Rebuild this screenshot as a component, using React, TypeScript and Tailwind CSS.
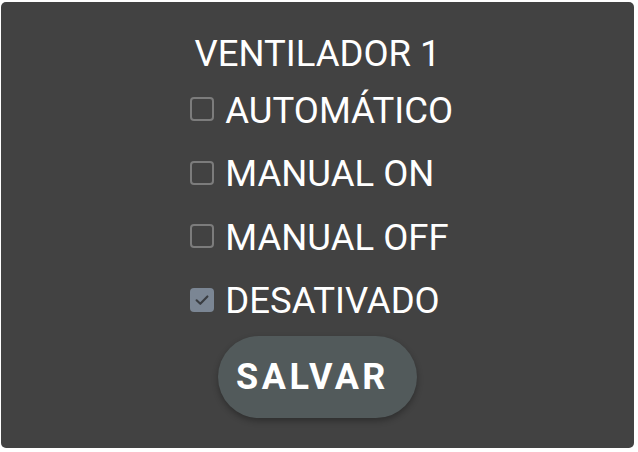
import React from "react";

const options = [
  { label: "AUTOMÁTICO", checked: false },
  { label: "MANUAL ON", checked: false },
  { label: "MANUAL OFF", checked: false },
  { label: "DESATIVADO", checked: true },
];

function Box({ checked }: { checked: boolean }) {
  if (checked) {
    return (
      <span className="mt-[6.5px] flex h-[24px] w-[24px] shrink-0 items-center justify-center rounded-[4px] bg-[#7b8694]">
        <svg width="18" height="18" viewBox="0 0 16 16" fill="none">
          <path d="M3.2 8.3 L6.5 11.4 L12.8 4.8" stroke="#3a3d42" strokeWidth="1.9" strokeLinecap="round" strokeLinejoin="round" />
        </svg>
      </span>
    );
  }
  return <span className="mt-[6.5px] block h-[24px] w-[24px] shrink-0 rounded-[4px] border-2 border-[#7c7c7c] bg-[#424242]" />;
}

export default function App() {
  return (
    <div className="h-[452px] w-[638px] bg-white pl-[1px] pt-[2px]" style={{ fontFamily: "Roboto, 'Liberation Sans', sans-serif" }}>
      <div className="flex h-[446px] w-[633px] flex-col items-center rounded-[5px] bg-[#424242] pt-[31.5px] text-white">
        <div className="text-[36.5px] leading-[40px]">VENTILADOR 1</div>
        <div className="mt-[17px] flex flex-col gap-[23.5px] pl-[8px]">
          {options.map((o) => (
            <div key={o.label} className="flex items-start gap-[11.5px] text-[36.5px] leading-[40px]">
              <Box checked={o.checked} />
              <span>{o.label}</span>
            </div>
          ))}
        </div>
        <button className="mt-[15px] flex h-[82px] items-center rounded-full bg-[#525a5b] pl-[18px] pr-[28px] text-[36px] font-bold tracking-[3.5px] text-white shadow-[0_3px_6px_rgba(0,0,0,0.3)]">
          SALVAR
        </button>
      </div>
    </div>
  );
}
